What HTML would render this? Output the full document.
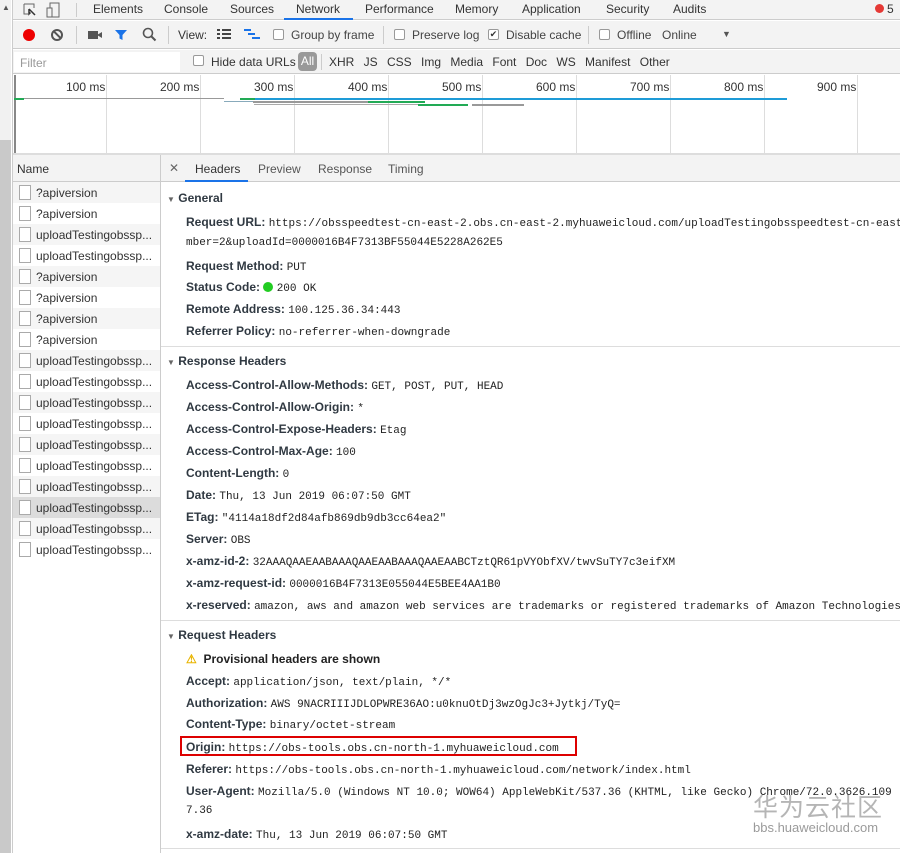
<!DOCTYPE html>
<html><head><meta charset="utf-8"><style>
*{margin:0;padding:0;box-sizing:border-box}
body{width:900px;height:853px;overflow:hidden;background:#fff;font-family:"Liberation Sans",sans-serif;font-size:12px;color:#333;position:relative}
.a{position:absolute;white-space:nowrap}
.m{font-family:"Liberation Mono",monospace;font-size:11px;color:#222}
.l{font-weight:bold;color:#303942;font-size:12px}
.cb{position:absolute;width:12px;height:12px;border:1px solid #999;background:#fff;border-radius:2px}
.g{color:#5a5a5a}
</style></head><body>
<!-- left scrollbar -->
<div class="a" style="left:0;top:0;width:11px;height:853px;background:#c9c9c9"></div>
<div class="a" style="left:0;top:0;width:11px;height:140px;background:#f1f1f1"></div>
<div class="a" style="left:2px;top:3px;font-size:8px;color:#555">▲</div>
<div class="a" style="left:11px;top:0;width:2px;height:853px;background:#fff"></div>
<div class="a" style="left:12px;top:0;width:1px;height:853px;background:#ccc"></div>
<!-- tab bar -->
<div class="a" style="left:13px;top:0;width:887px;height:20px;background:#f3f3f3;border-bottom:1px solid #ccc"></div>
<svg class="a" style="left:22px;top:2px" width="50" height="16"><path d="M2 2h10v4M2 2v10h4" stroke="#666" fill="none"/><path d="M7 7l6 6M7 7v5l1.5-1.5" stroke="#333" stroke-width="1.5" fill="none"/><rect x="28" y="1" width="9" height="14" stroke="#666" fill="none"/><rect x="25" y="6" width="5" height="9" stroke="#666" fill="#f3f3f3"/></svg>
<div class="a" style="left:76px;top:3px;width:1px;height:14px;background:#ccc"></div>
<div class="a" style="left:93px;top:2px;color:#333">Elements</div>
<div class="a" style="left:164px;top:2px;color:#333">Console</div>
<div class="a" style="left:230px;top:2px;color:#333">Sources</div>
<div class="a" style="left:296px;top:2px;color:#333">Network</div>
<div class="a" style="left:284px;top:18px;width:69px;height:2px;background:#1a73e8"></div>
<div class="a" style="left:365px;top:2px;color:#333">Performance</div>
<div class="a" style="left:455px;top:2px;color:#333">Memory</div>
<div class="a" style="left:522px;top:2px;color:#333">Application</div>
<div class="a" style="left:606px;top:2px;color:#333">Security</div>
<div class="a" style="left:673px;top:2px;color:#333">Audits</div>
<div class="a" style="left:875px;top:4px;width:9px;height:9px;border-radius:50%;background:#e53935"></div>
<div class="a" style="left:887px;top:2px">5</div>
<!-- toolbar -->
<div class="a" style="left:13px;top:21px;width:887px;height:28px;background:#f3f3f3;border-bottom:1px solid #ccc"></div>
<div class="a" style="left:23px;top:29px;width:12px;height:12px;border-radius:50%;background:#e00"></div>
<div class="a" style="left:51px;top:29px;width:12px;height:12px;border-radius:50%;border:2px solid #555"></div>
<div class="a" style="left:53px;top:34px;width:9px;height:2px;background:#555;transform:rotate(45deg)"></div>
<div class="a" style="left:76px;top:26px;width:1px;height:18px;background:#ccc"></div>
<div class="a" style="left:88px;top:31px;width:10px;height:8px;background:#555"></div>
<div class="a" style="left:97px;top:32px;border-right:5px solid #555;border-top:3px solid transparent;border-bottom:3px solid transparent"></div>
<svg class="a" style="left:114px;top:28px" width="14" height="14"><path d="M1 2h12l-4.5 5v5l-3-1.5V7z" fill="#1a73e8"/></svg>
<svg class="a" style="left:142px;top:27px" width="15" height="15"><circle cx="6" cy="6" r="4.5" stroke="#555" stroke-width="1.6" fill="none"/><path d="M9.5 9.5l4 4" stroke="#555" stroke-width="2"/></svg>
<div class="a" style="left:168px;top:26px;width:1px;height:18px;background:#ccc"></div>
<div class="a" style="left:178px;top:28px">View:</div>
<svg class="a" style="left:217px;top:29px" width="14" height="12"><path d="M0 1h3M5 1h9M0 5h3M5 5h9M0 9h3M5 9h9" stroke="#444" stroke-width="2"/></svg>
<svg class="a" style="left:244px;top:29px" width="16" height="12"><path d="M0 1h7M4 5h7M8 9h8" stroke="#1a73e8" stroke-width="2"/></svg>
<div class="cb" style="left:273px;top:29px;width:11px;height:11px"></div>
<div class="a" style="left:291px;top:28px;color:#444">Group by frame</div>
<div class="a" style="left:383px;top:26px;width:1px;height:18px;background:#ccc"></div>
<div class="cb" style="left:394px;top:29px;width:11px;height:11px"></div>
<div class="a" style="left:412px;top:28px;color:#444">Preserve log</div>
<div class="cb" style="left:488px;top:29px;width:11px;height:11px;font-size:9px;line-height:9px;text-align:center">✔</div>
<div class="a" style="left:506px;top:28px;color:#444">Disable cache</div>
<div class="a" style="left:588px;top:26px;width:1px;height:18px;background:#ccc"></div>
<div class="cb" style="left:599px;top:29px;width:11px;height:11px"></div>
<div class="a" style="left:617px;top:28px;color:#444">Offline</div>
<div class="a" style="left:662px;top:28px;color:#444">Online</div>
<div class="a" style="left:722px;top:29px;font-size:9px;color:#555">▼</div>
<!-- filter row -->
<div class="a" style="left:13px;top:50px;width:887px;height:24px;background:#f3f3f3;border-bottom:1px solid #ccc"></div>
<div class="a" style="left:14px;top:52px;width:166px;height:20px;background:#fff"></div>
<div class="a" style="left:20px;top:56px;color:#999">Filter</div>
<div class="cb" style="left:193px;top:55px;width:11px;height:11px"></div>
<div class="a" style="left:211px;top:55px;color:#333">Hide data URLs</div>
<div class="a" style="left:298px;top:52px;width:19px;height:19px;border-radius:4px;background:#999;color:#fff;text-align:center;line-height:19px">All</div>
<div class="a" style="left:321px;top:54px;width:1px;height:16px;background:#ccc"></div>
<div class="a" style="left:329px;top:55px;word-spacing:6px">XHR JS CSS Img Media Font Doc WS Manifest Other</div>
<!-- timeline -->
<div class="a" style="left:14px;top:75px;width:2px;height:78px;background:#888"></div>
<div class="a" style="left:13px;top:153px;width:887px;height:2px;background:#ddd"></div>
<div class="a" style="left:106px;top:75px;width:1px;height:78px;background:#ddd"></div>
<div class="a" style="left:200px;top:75px;width:1px;height:78px;background:#ddd"></div>
<div class="a" style="left:294px;top:75px;width:1px;height:78px;background:#ddd"></div>
<div class="a" style="left:388px;top:75px;width:1px;height:78px;background:#ddd"></div>
<div class="a" style="left:482px;top:75px;width:1px;height:78px;background:#ddd"></div>
<div class="a" style="left:576px;top:75px;width:1px;height:78px;background:#ddd"></div>
<div class="a" style="left:670px;top:75px;width:1px;height:78px;background:#ddd"></div>
<div class="a" style="left:764px;top:75px;width:1px;height:78px;background:#ddd"></div>
<div class="a" style="left:857px;top:75px;width:1px;height:78px;background:#ddd"></div>
<div class="a" style="left:66px;top:80px">100 ms</div>
<div class="a" style="left:160px;top:80px">200 ms</div>
<div class="a" style="left:254px;top:80px">300 ms</div>
<div class="a" style="left:348px;top:80px">400 ms</div>
<div class="a" style="left:442px;top:80px">500 ms</div>
<div class="a" style="left:536px;top:80px">600 ms</div>
<div class="a" style="left:630px;top:80px">700 ms</div>
<div class="a" style="left:724px;top:80px">800 ms</div>
<div class="a" style="left:817px;top:80px">900 ms</div>
<div class="a" style="left:14px;top:98px;width:210px;height:1px;background:#999"></div>
<div class="a" style="left:14px;top:98px;width:10px;height:2px;background:#2a5"></div>
<div class="a" style="left:240px;top:98px;width:15px;height:2px;background:#2a5"></div>
<div class="a" style="left:255px;top:98px;width:532px;height:2px;background:#1e9bd7"></div>
<div class="a" style="left:224px;top:101px;width:30px;height:1px;background:#8ab"></div>
<div class="a" style="left:253px;top:101px;width:115px;height:2px;background:#999"></div>
<div class="a" style="left:368px;top:101px;width:57px;height:2px;background:#2a5"></div>
<div class="a" style="left:254px;top:104px;width:164px;height:1px;background:#aaa"></div>
<div class="a" style="left:418px;top:104px;width:50px;height:2px;background:#2a5"></div>
<div class="a" style="left:472px;top:104px;width:52px;height:2px;background:#999"></div>
<!-- name column -->
<div class="a" style="left:13px;top:155px;width:147px;height:27px;background:#f3f3f3;border-bottom:1px solid #ccc"></div>
<div class="a" style="left:17px;top:162px">Name</div>
<div class="a" style="left:160px;top:155px;width:1px;height:698px;background:#ccc"></div>
<div id="list"></div>
<!-- detail tabs -->
<div class="a" style="left:161px;top:155px;width:739px;height:27px;background:#f3f3f3;border-bottom:1px solid #ccc"></div>
<div class="a" style="left:169px;top:161px;color:#666">✕</div>
<div class="a" style="left:195px;top:162px">Headers</div>
<div class="a" style="left:185px;top:180px;width:63px;height:2px;background:#1a73e8"></div>
<div class="a" style="left:258px;top:162px;color:#555">Preview</div>
<div class="a" style="left:318px;top:162px;color:#555">Response</div>
<div class="a" style="left:388px;top:162px;color:#555">Timing</div>

<div class="a l" style="left:167px;top:191px"><span style="font-size:8px;color:#666">▼</span> General</div>
<div class="a" style="left:186px;top:215px"><span class="l">Request URL:</span> <span class="m">https://obsspeedtest-cn-east-2.obs.cn-east-2.myhuaweicloud.com/uploadTestingobsspeedtest-cn-east</span></div>
<div class="a m" style="left:186px;top:237px">mber=2&amp;uploadId=0000016B4F7313BF55044E5228A262E5</div>
<div class="a" style="left:186px;top:259px"><span class="l">Request Method:</span> <span class="m">PUT</span></div>
<div class="a" style="left:186px;top:280px"><span class="l">Status Code:</span> <span style="display:inline-block;width:10px;height:10px;border-radius:50%;background:#2c2;vertical-align:-1px"></span> <span class="m">200 OK</span></div>
<div class="a" style="left:186px;top:302px"><span class="l">Remote Address:</span> <span class="m">100.125.36.34:443</span></div>
<div class="a" style="left:186px;top:324px"><span class="l">Referrer Policy:</span> <span class="m">no-referrer-when-downgrade</span></div>
<div class="a" style="left:161px;top:346px;width:739px;height:1px;background:#ddd"></div>

<div class="a l" style="left:167px;top:354px"><span style="font-size:8px;color:#666">▼</span> Response Headers</div>
<div class="a" style="left:186px;top:378px"><span class="l">Access-Control-Allow-Methods:</span> <span class="m">GET, POST, PUT, HEAD</span></div>
<div class="a" style="left:186px;top:400px"><span class="l">Access-Control-Allow-Origin:</span> <span class="m">*</span></div>
<div class="a" style="left:186px;top:422px"><span class="l">Access-Control-Expose-Headers:</span> <span class="m">Etag</span></div>
<div class="a" style="left:186px;top:444px"><span class="l">Access-Control-Max-Age:</span> <span class="m">100</span></div>
<div class="a" style="left:186px;top:466px"><span class="l">Content-Length:</span> <span class="m">0</span></div>
<div class="a" style="left:186px;top:488px"><span class="l">Date:</span> <span class="m">Thu, 13 Jun 2019 06:07:50 GMT</span></div>
<div class="a" style="left:186px;top:510px"><span class="l">ETag:</span> <span class="m">"4114a18df2d84afb869db9db3cc64ea2"</span></div>
<div class="a" style="left:186px;top:532px"><span class="l">Server:</span> <span class="m">OBS</span></div>
<div class="a" style="left:186px;top:554px"><span class="l">x-amz-id-2:</span> <span class="m">32AAAQAAEAABAAAQAAEAABAAAQAAEAABCTztQR61pVYObfXV/twvSuTY7c3eifXM</span></div>
<div class="a" style="left:186px;top:576px"><span class="l">x-amz-request-id:</span> <span class="m">0000016B4F7313E055044E5BEE4AA1B0</span></div>
<div class="a" style="left:186px;top:598px"><span class="l">x-reserved:</span> <span class="m">amazon, aws and amazon web services are trademarks or registered trademarks of Amazon Technologies</span></div>
<div class="a" style="left:161px;top:620px;width:739px;height:1px;background:#ddd"></div>

<div class="a l" style="left:167px;top:628px"><span style="font-size:8px;color:#666">▼</span> Request Headers</div>
<div class="a l" style="left:186px;top:652px"><span style="color:#e8b400">⚠</span>&nbsp; <span style="color:#222">Provisional headers are shown</span></div>
<div class="a" style="left:186px;top:674px"><span class="l">Accept:</span> <span class="m">application/json, text/plain, */*</span></div>
<div class="a" style="left:186px;top:696px"><span class="l">Authorization:</span> <span class="m">AWS 9NACRIIIJDLOPWRE36AO:u0knuOtDj3wzOgJc3+Jytkj/TyQ=</span></div>
<div class="a" style="left:186px;top:717px"><span class="l">Content-Type:</span> <span class="m">binary/octet-stream</span></div>
<div class="a" style="left:180px;top:736px;width:397px;height:20px;border:2px solid #d00"></div>
<div class="a" style="left:186px;top:740px"><span class="l">Origin:</span> <span class="m">https://obs-tools.obs.cn-north-1.myhuaweicloud.com</span></div>
<div class="a" style="left:186px;top:762px"><span class="l">Referer:</span> <span class="m">https://obs-tools.obs.cn-north-1.myhuaweicloud.com/network/index.html</span></div>
<div class="a" style="left:186px;top:784px"><span class="l">User-Agent:</span> <span class="m">Mozilla/5.0 (Windows NT 10.0; WOW64) AppleWebKit/537.36 (KHTML, like Gecko) Chrome/72.0.3626.109</span></div>
<div class="a m" style="left:186px;top:805px">7.36</div>
<div class="a" style="left:186px;top:827px"><span class="l">x-amz-date:</span> <span class="m">Thu, 13 Jun 2019 06:07:50 GMT</span></div>
<div class="a" style="left:161px;top:848px;width:739px;height:1px;background:#ddd"></div>
<div class="a" style="left:753px;top:788px;font-family:'Liberation Sans','Noto Sans CJK SC',sans-serif;font-size:25px;color:rgba(120,120,120,.55);letter-spacing:1px">华为云社区</div>
<div class="a" style="left:753px;top:820px;font-size:13px;color:rgba(120,120,120,.75)">bbs.huaweicloud.com</div>
<script>
var n=["?apiversion","?apiversion","uploadTestingobssp...","uploadTestingobssp...","?apiversion","?apiversion","?apiversion","?apiversion","uploadTestingobssp...","uploadTestingobssp...","uploadTestingobssp...","uploadTestingobssp...","uploadTestingobssp...","uploadTestingobssp...","uploadTestingobssp...","uploadTestingobssp...","uploadTestingobssp...","uploadTestingobssp..."];
var h="";
for(var i=0;i<n.length;i++){var y=182+i*21;var bg=i==15?"#dcdcdc":(i%2==0?"#f5f5f5":"#fff");
h+='<div class="a" style="left:13px;top:'+y+'px;width:147px;height:21px;background:'+bg+'"></div><div class="a" style="left:19px;top:'+(y+3)+'px;width:12px;height:15px;border:1px solid #aaa;background:#fff"></div><div class="a" style="left:36px;top:'+(y+4)+'px;color:#333">'+n[i]+'</div>';}
document.getElementById("list").outerHTML=h;
</script>
</body></html>
